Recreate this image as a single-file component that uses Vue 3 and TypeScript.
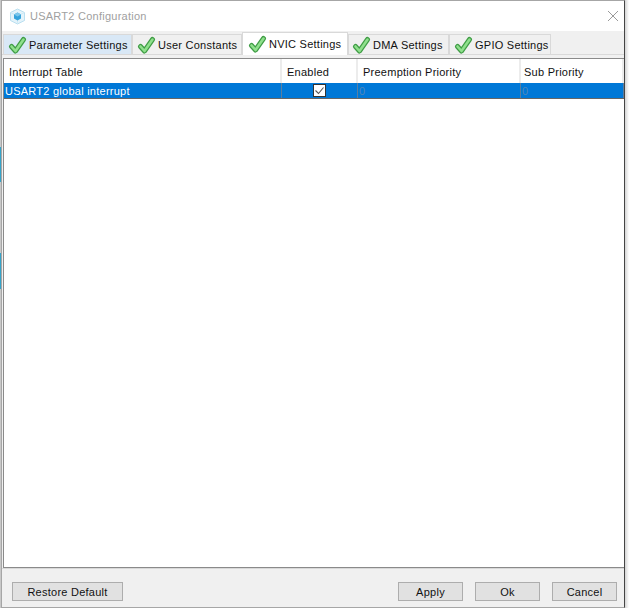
<script setup lang="ts">
const tabs = [
  { label: 'Parameter Settings', state: 'hover' },
  { label: 'User Constants', state: '' },
  { label: 'NVIC Settings', state: 'active' },
  { label: 'DMA Settings', state: '' },
  { label: 'GPIO Settings', state: '' },
]
</script>

<template>
  <div class="screen">
    <div class="behind"></div>
    <div class="dialog">
      <header class="title">
        <svg class="logo" width="17" height="17" viewBox="0 0 17 17">
          <path d="M8.500 1 15.500 4.500v8L8.500 16 1.500 12.500v-8z" fill="#e4f3fa" stroke="#b9dff0" />
          <path d="M1.500 4.500 8.500 8 15.500 4.500M8.500 8v8" fill="none" stroke="#cfe9f5" />
          <path d="M8.500 4.500 12 6.500v4L8.500 12.500 5 10.500v-4z" fill="#35a3dc" />
          <path d="M5 6.500 8.500 8.500 12 6.500 8.500 4.500z" fill="#7cc6ea" />
        </svg>
        <span class="title-text">USART2 Configuration</span>
        <svg class="close" width="12" height="12" viewBox="0 0 12 12">
          <path d="M1 1 11 11M11 1 1 11" stroke="#9a9a9a" stroke-width="1" fill="none" />
        </svg>
      </header>
      <nav class="tabs">
        <div v-for="t in tabs" :key="t.label" class="tab" :class="t.state">
          <svg class="check" width="19" height="19" viewBox="0 0 19 19">
            <path d="M3.500 10.500 7.500 15 15.500 3.500" fill="none" stroke="#3f9c45" stroke-width="5" stroke-linejoin="round" stroke-linecap="round" />
            <path d="M3.500 10.500 7.500 15 15.500 3.500" fill="none" stroke="#8fe08c" stroke-width="2.600" stroke-linejoin="round" stroke-linecap="round" />
          </svg>
          <span>{{ t.label }}</span>
        </div>
      </nav>
      <main class="content">
        <div class="table">
          <div class="row head">
            <div class="c c1">Interrupt Table</div>
            <div class="c c2">Enabled</div>
            <div class="c c3">Preemption Priority</div>
            <div class="c c4">Sub Priority</div>
          </div>
          <div class="row sel">
            <div class="c c1">USART2 global interrupt</div>
            <div class="c c2">
              <span class="box">
                <svg width="11" height="11" viewBox="0 0 11 11">
                  <path d="M1.500 5.500 4.500 8.500 9.500 2.500" stroke="#555" stroke-width="1.100" fill="none" />
                </svg>
              </span>
            </div>
            <div class="c c3 dim">0</div>
            <div class="c c4 dim">0</div>
          </div>
        </div>
      </main>
      <footer class="foot">
        <button class="btn wide">Restore Default</button>
        <span class="grow"></span>
        <button class="btn">Apply</button>
        <button class="btn">Ok</button>
        <button class="btn">Cancel</button>
      </footer>
    </div>
    <div class="shadow"></div>
  </div>
</template>

<style>
html, body { margin: 0; background: #fff; }
</style>

<style scoped>
.screen { width: 629px; height: 608px; display: flex; overflow: hidden; font-family: "Liberation Sans", Arial, sans-serif; font-size: 11px; letter-spacing: .25px; color: #111; }
.behind { width: 1px; flex: none; background: linear-gradient(to bottom, #c8c8c8 147px, #35a3c8 147px, #35a3c8 182px, #c8c8c8 182px, #c8c8c8 253px, #35a3c8 253px, #35a3c8 289px, #c8c8c8 289px); }
.dialog { width: 624px; flex: none; box-sizing: border-box; border: 1px solid #a6a6a6; border-right-color: #444; display: flex; flex-direction: column; background: #f0f0f0; }
.shadow { flex: 1; background: linear-gradient(to right, #d4d4d4, #fff); }
.title { height: 30px; flex: none; background: #fff; display: flex; align-items: center; padding: 0 5px 0 7px; gap: 4px; }
.title-text { color: #a0a0a0; }
.close { margin-left: auto; }
.logo { flex: none; }
.tabs { height: 24px; flex: none; display: flex; align-items: flex-end; padding-left: 1px; border-bottom: 1px solid #d9d9d9; box-sizing: border-box; }
.tab { height: 20px; flex: none; box-sizing: border-box; border: 1px solid #d9d9d9; border-bottom: 0; background: #f0f0f0; display: flex; align-items: center; padding: 1px 0 0 4px; gap: 2px; white-space: nowrap; overflow: hidden; }
.tab:nth-child(1) { width: 129px; }
.tab:nth-child(2) { width: 110px; }
.tab:nth-child(3) { width: 106px; }
.tab:nth-child(4) { width: 101px; padding-left: 3px; }
.tab:nth-child(5) { width: 102px; }
.tab.hover { background: #d9e8f6; }
.tab.active { height: 23px; background: #fff; margin-bottom: -1px; padding: 0 0 0 5px; }
.check { flex: none; }
.content { flex: 1; background: #f0f0f0; padding: 3px 0 0 1px; display: flex; min-height: 0; }
.table { flex: 1; background: #fff; border: 1px solid #8a8a8a; border-right: 0; height: 510px; box-sizing: border-box; }
.row { display: flex; }
.head { height: 24px; }
.head .c { border-right: 2px solid #ececec; display: flex; align-items: center; padding: 2px 0 0 5px; }
.head .c4 { padding-left: 3px; }
.sel { height: 16px; box-sizing: border-box; background: #0078d7; color: #fff; border-bottom: 1px solid #666; }
.sel .c { border-right: 1px solid #5a7ea0; display: flex; align-items: center; padding-left: 1px; }
.c { box-sizing: border-box; white-space: nowrap; }
.c1 { width: 278px; }
.c2 { width: 76px; }
.c3 { width: 163px; }
.c4 { flex: 1; }
.sel .c2 { justify-content: center; padding: 0; }
.sel .dim { color: #4f87b8; }
.box { width: 13px; height: 13px; box-sizing: border-box; background: #fff; border: 1px solid #333; display: flex; align-items: center; justify-content: center; }
.foot { height: 39px; flex: none; border-top: 1px solid #d9d9d9; display: flex; align-items: flex-start; padding: 13px 7px 0 10px; gap: 12px; box-sizing: border-box; }
.grow { flex: 1; }
.btn { width: 65px; height: 19px; box-sizing: border-box; border: 1px solid #adadad; background: #e1e1e1; font: inherit; letter-spacing: inherit; color: #111; padding: 0; }
.btn.wide { width: 111px; }
</style>
